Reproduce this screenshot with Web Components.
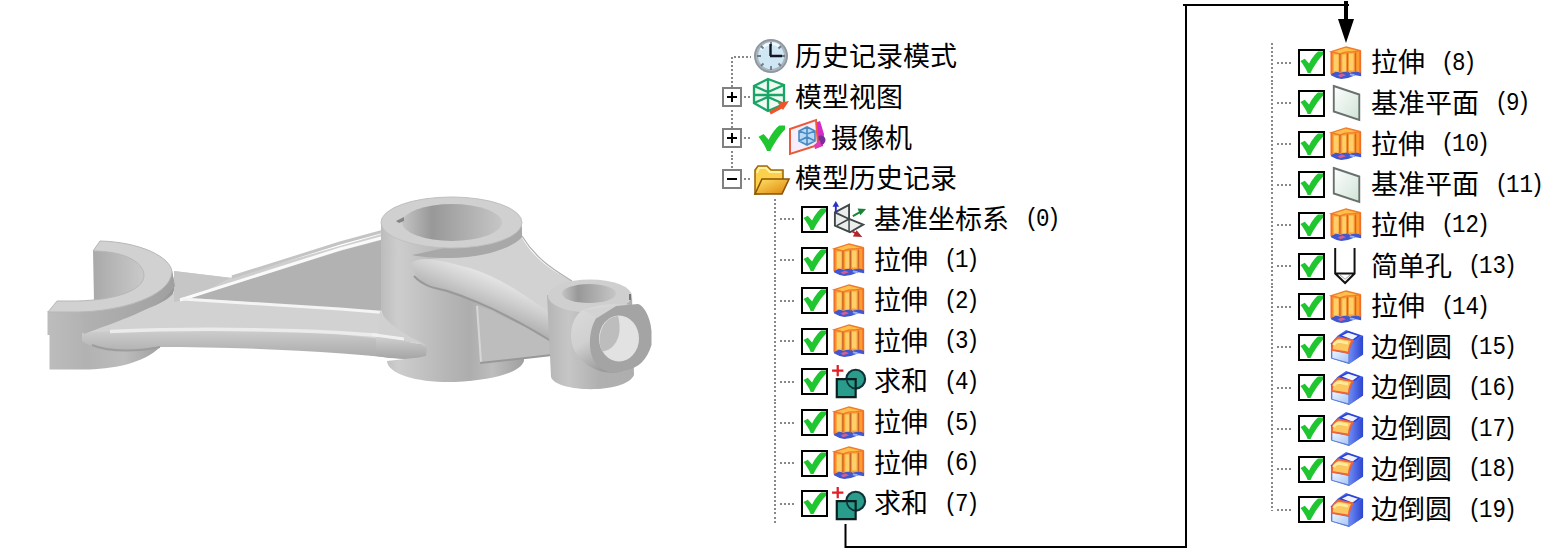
<!DOCTYPE html>
<html lang="zh-CN">
<head>
<meta charset="utf-8">
<title>模型历史记录</title>
<style>
    body {
        margin: 0;
        width: 1543px;
        height: 548px;
        overflow: hidden;
        background: #fff;
        color: #000;
        font-family: "Noto Sans CJK SC", sans-serif;
    }
</style>
</head>
<body>
<history-page>
    <part-view slot="part"></part-view>
    <history-tree slot="first">
        <root-row icon="clock" guide="first">历史记录模式</root-row>
        <root-row icon="view" box="plus">模型视图</root-row>
        <root-row icon="camera" box="plus" checked>摄像机</root-row>
        <root-row icon="folder" box="minus" guide="last">模型历史记录</root-row>
        <feature-row icon="csys" no="0" style="--ind:52px">基准坐标系</feature-row>
        <feature-row icon="extrude" no="1" style="--ind:52px">拉伸</feature-row>
        <feature-row icon="extrude" no="2" style="--ind:52px">拉伸</feature-row>
        <feature-row icon="extrude" no="3" style="--ind:52px">拉伸</feature-row>
        <feature-row icon="unite" no="4" style="--ind:52px">求和</feature-row>
        <feature-row icon="extrude" no="5" style="--ind:52px">拉伸</feature-row>
        <feature-row icon="extrude" no="6" style="--ind:52px">拉伸</feature-row>
        <feature-row icon="unite" no="7" style="--ind:52px">求和</feature-row>
    </history-tree>
    <history-tree slot="second">
        <feature-row icon="extrude" no="8">拉伸</feature-row>
        <feature-row icon="plane" no="9">基准平面</feature-row>
        <feature-row icon="extrude" no="10">拉伸</feature-row>
        <feature-row icon="plane" no="11">基准平面</feature-row>
        <feature-row icon="extrude" no="12">拉伸</feature-row>
        <feature-row icon="hole" no="13">简单孔</feature-row>
        <feature-row icon="extrude" no="14">拉伸</feature-row>
        <feature-row icon="blend" no="15">边倒圆</feature-row>
        <feature-row icon="blend" no="16">边倒圆</feature-row>
        <feature-row icon="blend" no="17">边倒圆</feature-row>
        <feature-row icon="blend" no="18">边倒圆</feature-row>
        <feature-row icon="blend" no="19" last>边倒圆</feature-row>
    </history-tree>
    <flow-arrow slot="arrow"></flow-arrow>
</history-page>

<script>
// all icons are drawn on a 36 x 36 grid
const icons = {
    clock: `
        <circle cx="18" cy="17" r="17" fill="#8e979e"/>
        <circle cx="18" cy="17" r="15.2" fill="#a9b4bc"/>
        <circle cx="18" cy="17" r="13" fill="#cfe6f5"/>
        <path d="M8 11a12 12 0 0 1 19-3" stroke="#eef8ff" stroke-width="3" fill="none"/>
        <path d="M18 3v4M18 27v4M4 17h4M28 17h4M8 7l2.5 2.5M28 7l-2.5 2.5M8 27l2.5-2.5M28 27l-2.5-2.5" stroke="#6b7b86" stroke-width="1.8"/>
        <path d="M17.5 5v12M17 17h12" stroke="#10171d" stroke-width="2.4" fill="none"/>`,
    view: `
        <path d="M15 0L31 6v20L16 32 1 25V7z" fill="#effaf3"/>
        <path d="M15 0L31 6v19L15 32 1 24V7zM1 7l14 6 16-7M15 0v32M1 24l14-6 16 7M2 16h28" fill="none" stroke="#18a565" stroke-width="2.3"/>
        <path d="M17 34l13-7" stroke="#f0522a" stroke-width="3.5"/>
        <path d="M25 24l11-2-6 9z" fill="#f0522a"/>`,
    camera: `
        <path d="M26 3l5-2 4 13-1 12-8 3z" fill="#d42cc4"/>
        <circle cx="32" cy="20" r="4.5" fill="#7d2a9a"/>
        <path d="M1 9L27 0l2 25L1 34z" fill="#f6eefa" stroke="#e9593a" stroke-width="2"/>
        <path d="M10 11l8-4 8 4v10l-8 4-8-4z" fill="#b9daf4"/>
        <path d="M10 11l8-4 8 4v10l-8 4-8-4zM10 11l8 3 8-3M18 7v18M10 21l8-4 8 4" fill="none" stroke="#4a8ac2" stroke-width="1.6"/>
        <path d="M25 25l6-5 1 6-6 3z" fill="#e13bb8"/>`,
    folder: `
        <path d="M2 33V9l3-4h9l4 4h12v21z" fill="#fbd14b" stroke="#a06a0b" stroke-width="1.6"/>
        <path d="M4 12l2-5h7l4 4h11" stroke="#fff2a8" stroke-width="2" fill="none"/>
        <path d="M2 33L9 18h27l-7 15z" fill="url(#fold)" stroke="#8d5205" stroke-width="1.6"/>
        <defs><linearGradient id="fold" x1="0" y1="0" x2="1" y2="1"><stop stop-color="#ffe46a"/><stop offset="1" stop-color="#de8408"/></linearGradient></defs>`,
    csys: `
        <path d="M2 11L17 3v15l15 6-14 7L2 24z" fill="#eceeee"/>
        <path d="M17 19V3L2 11v14l16 7 14-8-15-6L2 11" fill="none" stroke="#3f4747" stroke-width="2"/>
        <path d="M17 18L4 25M17 18v13" stroke="#3f4747" stroke-width="1.6"/>
        <path d="M3 11V2" stroke="#2730c8" stroke-width="2"/><path d="M-.5 5L3-1l3.5 6z" fill="#2730c8"/>
        <path d="M21 15l9-5" stroke="#168335" stroke-width="2"/><path d="M26 7l9 .5-6 6.5z" fill="#168335"/>
        <path d="M20 31l6 3" stroke="#b3262b" stroke-width="2"/><path d="M25 30l6 7-10-.5z" fill="#b3262b"/>`,
    extrude: `
        <path d="M1 29l5-2 5 1 5-2 5 2 6-2 6 1v5l-6-1-8 3-7 1-5-1-6-3z" fill="#4157cf"/>
        <path d="M1.5 6L17 1l15.5 4v23l-5-1-6 1-4-1-6 1-4-1-6 2z" fill="#ff9c30"/>
        <path d="M1.5 6L17 1l15.5 4-8 1-8 .5-6 2z" fill="#ffc04a" stroke="#f07c2c" stroke-width="1.5"/>
        <path d="M4 9h5v17l-5 1zM13 9h4v18h-4zM20 8h5v18h-5z" fill="#ffd06a"/>
        <path d="M1.5 6v24M32 5v23" stroke="#f0702a" stroke-width="2"/>
        <path d="M10.5 8.5V28M18.5 7.5V28M27 7v20" stroke="#c9682a" stroke-width="1.5"/>
        <path d="M8 31l5-2 4 2-6 2z" fill="#d25f92"/><path d="M21 30l5 1" stroke="#93b0f4" stroke-width="2"/>`,
    unite: `
        <circle cx="24" cy="15" r="10" fill="#2a9c8b" stroke="#0d3336" stroke-width="2.3"/>
        <path d="M4 15h20v19H4z" fill="#2a9c8b" stroke="#0b1f20" stroke-width="2.3"/>
        <path d="M14.5 15A10 10 0 0 0 24 25" fill="none" stroke="#0d3336" stroke-width="1.8"/>
        <path d="M5 0v12M-1 6h12" stroke="#e01f26" stroke-width="2.4"/>`,
    plane: `
        <path d="M4 0l27 9v27L4 27z" fill="url(#pl)" stroke="#69716c" stroke-width="2"/>
        <defs><linearGradient id="pl" x1="0" y1="0" x2="1" y2="1"><stop stop-color="#fff"/><stop offset="1" stop-color="#cfe3d6"/></linearGradient></defs>`,
    hole: `
        <path d="M5.5-1v27L16 36l10-10V-1M6 26h20" fill="none" stroke="#111" stroke-width="2.1"/>
        <path d="M10 27l6 5 6-5" fill="none" stroke="#999" stroke-width="1"/>`,
    blend: `
        <path d="M1 14L8 6 17 0l18 6v20L20 36 1 30z" fill="#4a66ea"/>
        <path d="M11 6l8-4 12 4-7 5z" fill="#eef3ff" stroke="#2b40d0" stroke-width="1.5"/>
        <path d="M24 12l11-6v20L20 36V24z" fill="url(#bl)"/>
        <path d="M2 21l18 4v10L2 30z" fill="url(#fr)" stroke="#5b7fd6" stroke-width="1"/>
        <path d="M2 21C2 14 4 10 9 8l15 3c-2 3-4 7-4 13z" fill="#fbc860" stroke="#ee6438" stroke-width="2"/>
        <path d="M4 16c1-3 3-4 6-4l9 2" stroke="#ffeb9c" stroke-width="3" fill="none"/>
        <defs>
            <linearGradient id="bl"><stop stop-color="#6f8cf6"/><stop offset="1" stop-color="#2c45cf"/></linearGradient>
            <linearGradient id="fr" x1="0" y1="0" x2="1" y2="1"><stop stop-color="#f0f7ff"/><stop offset="1" stop-color="#a5c4f6"/></linearGradient>
        </defs>`
}

class TreeIcon extends HTMLElement {
    constructor() {
        super()
        this.shadow = this.attachShadow({ mode: "open" })
    }

    connectedCallback() {
        this.shadow.innerHTML = `
            <style>
                :host { display: block; flex: none; width: 36px; height: 36px; }
                svg { display: block; width: 100%; height: 100%; overflow: visible; }
            </style>
            <svg viewBox="0 0 36 36">${icons[this.getAttribute("name")]}</svg>
        `
    }
}

customElements.define("tree-icon", TreeIcon)

class CheckMark extends HTMLElement {
    constructor() {
        super()
        this.shadow = this.attachShadow({ mode: "open" })
        this.shadow.innerHTML = `
            <style>
                :host { display: block; flex: none; box-sizing: border-box; width: 27px; height: 27px; }
                :host([boxed]) { border: 2px solid #000; background: #fff; }
                svg { display: block; width: 100%; height: 100%; }
            </style>
            <svg viewBox="0 0 24 24">
                <path d="M.5 10.5L5 8l4.5 5C12 8 16 2.5 19 .5h5v3.5C19 9 14 17 11 23H8C6 18 3.5 14.5 .5 10.5z" fill="#1fc62f"/>
            </svg>
        `
    }
}

customElements.define("check-mark", CheckMark)

class RootRow extends HTMLElement {
    constructor() {
        super()
        this.shadow = this.attachShadow({ mode: "open" })
    }

    connectedCallback() {
        const box = this.getAttribute("box")

        this.shadow.innerHTML = `
            <style>
                :host {
                    display: flex;
                    align-items: center;
                    height: 40.65px;
                    font-size: 27px;
                    line-height: 40px;
                    white-space: nowrap;
                }
                .guide {
                    align-self: stretch;
                    width: 20px;
                    display: grid;
                    place-items: center;
                    background: repeating-linear-gradient(#888 0 2px, transparent 2px 4.07px) 9px 0 / 2px 100% no-repeat;
                }
                :host([guide="first"]) .guide { background-size: 2px 20px; background-position: 9px 100%; }
                :host([guide="last"]) .guide { background-size: 2px 20px; }
                .box {
                    box-sizing: border-box;
                    width: 20px;
                    height: 20px;
                    border: 2px solid #808080;
                    background:
                        linear-gradient(#000, #000) center / 10px 2px no-repeat,
                        linear-gradient(#000, #000) center / 2px var(--v, 0) no-repeat,
                        #fff;
                }
                .plus { --v: 10px; }
                .dots {
                    width: 7px;
                    height: 2px;
                    margin: 0 2px;
                    background: repeating-linear-gradient(90deg, #888 0 2px, transparent 2px 4.07px);
                }
                :host([guide="first"]) .dots { width: 17px; margin-left: -8px; }
                check-mark { margin: 0 4px 0 5px; }
                .text { margin-left: 6px; padding-bottom: 3px; }
            </style>
            <div class="guide">${box ? `<div class="box ${box}"></div>` : ""}</div>
            <div class="dots"></div>
            ${this.hasAttribute("checked") ? "<check-mark></check-mark>" : ""}
            <tree-icon name="${this.getAttribute("icon")}"></tree-icon>
            <div class="text"><slot></slot></div>
        `
    }
}

customElements.define("root-row", RootRow)

class FeatureRow extends HTMLElement {
    constructor() {
        super()
        this.shadow = this.attachShadow({ mode: "open" })
    }

    connectedCallback() {
        this.shadow.innerHTML = `
            <style>
                :host {
                    display: flex;
                    align-items: center;
                    height: 40.65px;
                    padding-left: var(--ind, 0);
                    font-size: 27px;
                    line-height: 40px;
                    white-space: nowrap;
                }
                .guide {
                    flex: none;
                    align-self: stretch;
                    width: 22px;
                    margin-right: 5px;
                    background:
                        repeating-linear-gradient(#888 0 2px, transparent 2px 4.07px) 0 0 / 2px 100% no-repeat,
                        repeating-linear-gradient(90deg, transparent 0 2px, #888 2px 4.07px) 4px 50% / 18px 2px no-repeat;
                }
                :host([last]) .guide { background-size: 2px 21px, 18px 2px; }
                tree-icon { width: 34px; height: 34px; margin: 0 7px 0 5px; }
                .text { padding-bottom: 3px; }
                .no {
                    margin-left: 16px;
                    font: 22.5px/40px "Liberation Mono", monospace;
                    transform: scaleY(1.15);
                }
                .no span { margin: 0 -2.5px; }
            </style>
            <div class="guide"></div>
            <check-mark boxed></check-mark>
            <tree-icon name="${this.getAttribute("icon")}"></tree-icon>
            <div class="text"><slot></slot></div>
            <div class="no">(<span>${this.getAttribute("no")}</span>)</div>
        `
    }
}

customElements.define("feature-row", FeatureRow)

class HistoryTree extends HTMLElement {
    constructor() {
        super()
        this.shadow = this.attachShadow({ mode: "open" })
        this.shadow.innerHTML = `
            <style>
                :host { display: flex; flex-direction: column; }
            </style>
            <slot></slot>
        `
    }
}

customElements.define("history-tree", HistoryTree)

class FlowArrow extends HTMLElement {
    constructor() {
        super()
        this.shadow = this.attachShadow({ mode: "open" })
        this.shadow.innerHTML = `
            <style>
                :host { display: block; }
                svg { display: block; }
            </style>
            <svg width="520" height="548" viewBox="840 0 520 548">
                <path d="M845.5 524v23H1186V5" fill="none" stroke="#000" stroke-width="2"/>
                <path d="M1183 5h166" stroke="#000" stroke-width="2"/>
                <path d="M1346 1v20" stroke="#000" stroke-width="4"/>
                <path d="M1338 19h16l-8 24z"/>
            </svg>
        `
    }
}

customElements.define("flow-arrow", FlowArrow)

class PartView extends HTMLElement {
    constructor() {
        super()
        this.shadow = this.attachShadow({ mode: "open" })
        this.shadow.innerHTML = `
            <style>
                :host { display: block; }
                svg { display: block; }
            </style>
            <svg width="700" height="548" viewBox="0 0 700 548">
                <defs>
                    <linearGradient id="fork"><stop stop-color="#bdbdbd"/><stop offset=".3" stop-color="#b2b2b2"/><stop offset=".6" stop-color="#bcbcbc"/><stop offset="1" stop-color="#959595"/></linearGradient>
                    <linearGradient id="side"><stop stop-color="#b2b2b2"/><stop offset=".5" stop-color="#a9a9a9"/><stop offset="1" stop-color="#a0a0a0"/></linearGradient>
                    <linearGradient id="wall"><stop stop-color="#a9a9a9"/><stop offset="1" stop-color="#cbcbcb"/></linearGradient>
                    <linearGradient id="cyl"><stop stop-color="#bcbcbc"/><stop offset=".12" stop-color="#cdcdcd"/><stop offset=".4" stop-color="#bababa"/><stop offset=".62" stop-color="#adadad"/><stop offset=".78" stop-color="#bdbdbd"/><stop offset="1" stop-color="#a0a0a0"/></linearGradient>
                    <linearGradient id="bore"><stop stop-color="#c4c4c4"/><stop offset=".3" stop-color="#989898"/><stop offset="1" stop-color="#c6c6c6"/></linearGradient>
                    <linearGradient id="face" x1="0" y1="0" x2="0" y2="1"><stop stop-color="#cfcfcf"/><stop offset=".5" stop-color="#b9b9b9"/><stop offset="1" stop-color="#a6a6a6"/></linearGradient>
                    <linearGradient id="band" gradientUnits="userSpaceOnUse" x1="490" y1="276" x2="477" y2="308"><stop stop-color="#e4e4e4"/><stop offset=".45" stop-color="#cfcfcf"/><stop offset="1" stop-color="#b2b2b2"/></linearGradient>
                    <linearGradient id="small"><stop stop-color="#b5b5b5"/><stop offset=".25" stop-color="#c6c6c6"/><stop offset=".6" stop-color="#b0b0b0"/><stop offset="1" stop-color="#aeaeae"/></linearGradient>
                    <linearGradient id="boss" x1="0" y1="0" x2=".6" y2="1"><stop stop-color="#dcdcdc"/><stop offset=".5" stop-color="#d0d0d0"/><stop offset="1" stop-color="#8f8f8f"/></linearGradient>
                </defs>

                <!-- fork -->
                <path d="M93 250L94 301C125 299 146 290 146 275C144 258 120 250 93 250Z" fill="url(#wall)"/>
                <path d="M47.5 311L80 311C130 309 168 293 172 271L175 286L160 347C143 364 110 370 80 369.5L49.5 369.5V335H47.5Z" fill="url(#fork)"/>

                <!-- long arm -->
                <path d="M174 271L232 278L395 300L400 342L300 331L84 334L115 320C150 309 172 300 175 290Z" fill="#d2d2d2"/>
                <path d="M174 271L232 278L190 299L174 302Z" fill="#c6c6c6"/>
                <path d="M82 333C160 328 250 327 330 333L430 345L430 362C340 351 250 347 155 347C120 354 94 350 82 341Z" fill="url(#face)"/>
                <path d="M92 345C110 353 142 351 160 347" fill="none" stroke="#9d9d9d" stroke-width="2"/>
                <path d="M110 331.5C190 328 310 328 410 338" fill="none" stroke="#ebebeb" stroke-width="3.5"/>

                <!-- rib between arm and hub -->
                <path d="M232 277L385 233L385 245L190 299Z" fill="#cfcfcf"/>
                <path d="M190 298L340 251L385 239L388 313L340 309Z" fill="#b2b2b2"/>
                <path d="M180 300L340 249L385 237" fill="none" stroke="#fafafa" stroke-width="3"/>
                <path d="M232 277L340 243L384 231" fill="none" stroke="#c4c4c4" stroke-width="3"/>
                <path d="M182 299L340 309L390 313" fill="none" stroke="#f4f4f4" stroke-width="3"/>

                <!-- fork top ring -->
                <path d="M172 271C168 296 125 312 80 312L84 334C115 322 160 309 175 286Z" fill="url(#side)"/>
                <path d="M100 241C140 242 171 257 172 272C170 297 120 311 80 312L48 312L57 301L77 301C117 300 144 290 144 275C143 260 120 251 93 251Z" fill="#d1d1d1" stroke="#b7b7b7" stroke-width="1"/>

                <!-- hub -->
                <path d="M381 223V309C383 322 400 336 422 345V357L387 361C388 375 420 383 455 382C492 380 520 373 524 361L521 240V223Z" fill="url(#cyl)"/>
                <path d="M380 309C384 322 405 335 426 345L378 337Z" fill="#d0d0d0"/>
                <path d="M376 337C395 338 410 341 427 348L426 356Q402 361 376 356Z" fill="url(#face)"/>
                <path d="M372 334.5L404 339" stroke="#f0f0f0" stroke-width="3"/>
                <path d="M477 305L553 339V355L524 358L480 364Z" fill="#bdbdbd"/>
                <path d="M477 306L481 362" stroke="#d6d6d6" stroke-width="2"/>
                <path d="M480 363L552 355" stroke="#989898" stroke-width="2"/>

                <!-- short arm -->
                <path d="M415 260L470 256L521 236C535 262 557 273 572 281L553 325C505 288 460 268 415 260Z" fill="#d2d2d2"/>
                <path d="M522 236C537 261 558 272 572 281" fill="none" stroke="#b0b0b0" stroke-width="1.2"/>
                <path d="M412 263C422 254 450 263 470 268C505 279 532 301 553 315V342C510 317 475 299 444 288C427 287 414 279 412 263Z" fill="url(#band)"/>
                <path d="M414 276C425 288 438 288 447 291C485 303 522 323 551 341" fill="none" stroke="#999" stroke-width="2"/>

                <!-- hub top -->
                <path d="M445 248C490 248 522 237 522 223V237C510 251 475 258 450 258C435 258 420 257 412 255Z" fill="#a8a8a8"/>
                <ellipse cx="451.500" cy="222.500" rx="70.500" ry="25.500" fill="#d0d0d0" stroke="#c0c0c0" stroke-width="1"/>
                <ellipse cx="452" cy="222.500" rx="50" ry="18.500" fill="url(#bore)"/>
                <path d="M404 217L396 221L399 223L404 221Z" fill="#858585"/>

                <!-- small boss -->
                <path d="M547 295L551 377C556 393 626 394 634 375L632 295Z" fill="url(#small)"/>
                <ellipse cx="590" cy="296" rx="42" ry="16.500" fill="#cfcfcf"/>
                <ellipse cx="589" cy="293.500" rx="27" ry="9.500" fill="url(#bore)"/>
                <path d="M630 294v6" stroke="#777" stroke-width="2"/>

                <!-- cross hole -->
                <path d="M583 310C570 317 567 342 577 355C588 369 606 376 622 371L638 307Q615 299 583 310Z" fill="url(#boss)"/>
                <path d="M597 317L616 306L638 304C645 306 651 320 651.5 331V345C647 360 638 368 627 370C613 375 602 373 595 362C588 352 588 330 597 317Z" fill="#a4a4a4"/>
                <path d="M583 310L600 308L616 306L597 318Z" fill="#d3d3d3"/>
                <ellipse cx="619" cy="338.500" rx="20" ry="23" fill="#e2e2e2"/>
                <path d="M618 316C621 327 620 338 614 345C610 350 604 352 602 351C596 338 602 317 618 316Z" fill="#bdbdbd"/>
            </svg>
        `
    }
}

customElements.define("part-view", PartView)

class HistoryPage extends HTMLElement {
    constructor() {
        super()
        this.shadow = this.attachShadow({ mode: "open" })
        this.shadow.innerHTML = `
            <style>
                :host {
                    display: grid;
                    grid-template-columns: 722px 549px 272px;
                    height: 548px;
                    position: relative;
                }
                .first { padding-top: 36.5px; }
                .second { padding-top: 42.5px; }
                /* the arrow lies over both trees */
                .arrow { position: absolute; left: 840px; top: 0; }
            </style>
            <div><slot name="part"></slot></div>
            <div class="first"><slot name="first"></slot></div>
            <div class="second"><slot name="second"></slot></div>
            <div class="arrow"><slot name="arrow"></slot></div>
        `
    }
}

customElements.define("history-page", HistoryPage)
</script>
</body>
</html>
